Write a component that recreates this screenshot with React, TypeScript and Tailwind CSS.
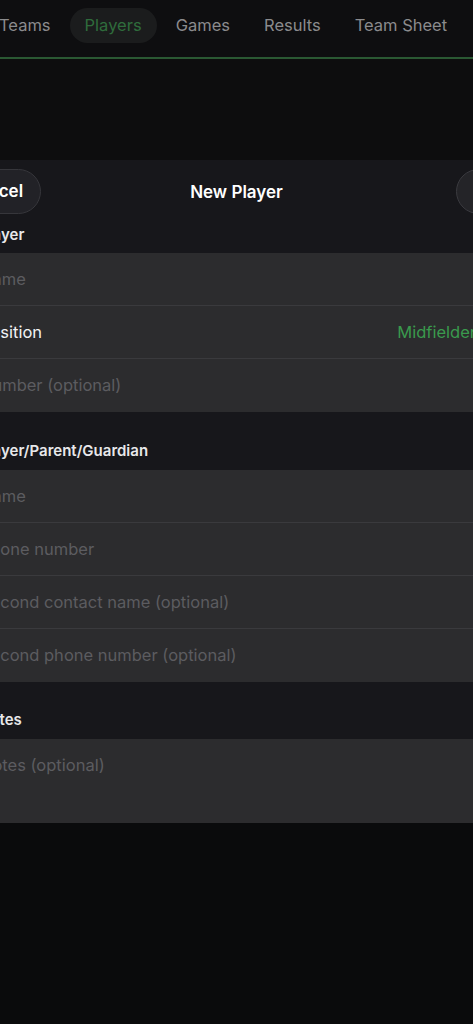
import { useState } from 'react';

const tabs = ['Teams', 'Players', 'Games', 'Results', 'Team Sheet'];

function SectionHeader({ title, className }: { title: string; className: string }) {
  return (
    <div className={`pl-[13px] ${className}`}>
      <p className="text-[15px] leading-[16px] font-semibold text-[#e8e8ea]">{title}</p>
    </div>
  );
}

function FieldRow({ placeholder, last }: { placeholder: string; last?: boolean }) {
  return (
    <div className="pl-[14px] h-[53px] flex">
      <div
        className={`flex-1 flex items-center ${last ? '' : 'border-b border-[#3a3a3d]'}`}
      >
        <input
          placeholder={placeholder}
          className="w-full bg-transparent outline-none text-[16.5px] text-white placeholder:text-[#5c5c60]"
        />
      </div>
    </div>
  );
}

export default function App() {
  const [activeTab] = useState('Players');

  return (
    <div
      className="w-[473px] h-[1024px] overflow-hidden bg-[#0a0b0c] flex flex-col"
      style={{ fontFamily: 'Inter, "Noto Sans", sans-serif' }}
    >
      {/* Top tabs */}
      <div className="h-[57px] bg-[#0e0e10] flex items-start pt-[8px] gap-[4px] -ml-[16px] shrink-0">
        {tabs.map(tab => (
          <div
            key={tab}
            className={`px-[15px] h-[35px] flex items-center rounded-full text-[16.5px] whitespace-nowrap ${
              tab === activeTab ? 'bg-[#1b1c1d] text-[#2f6c3c]' : 'text-[#8b8b8d]'
            }`}
          >
            {tab}
          </div>
        ))}
      </div>
      <div className="h-[2px] bg-[#2a5833] shrink-0"></div>
      <div className="h-[101px] bg-[#0d0d0e] shrink-0"></div>

      {/* New Player sheet */}
      <div className="bg-[#17171b] shrink-0">
        <div className="grid grid-cols-[1fr_auto_1fr] items-center pt-[9px] h-[54px]">
          <div className="flex justify-start">
            <button className="-ml-[52px] h-[45px] px-[17px] rounded-full bg-[#222227] border border-[#36363b] text-[17px] font-semibold text-white">
              Cancel
            </button>
          </div>
          <h1 className="text-[17px] font-semibold text-white pt-[3px]">New Player</h1>
          <div className="flex justify-end">
            <div className="-mr-[28px] w-[45px] h-[45px] rounded-full bg-[#242428] border border-[#3a3a3f]"></div>
          </div>
        </div>

        <div className="-ml-[34px]">
          <SectionHeader title="Player" className="pt-[13px] pb-[10px]" />
          <div className="bg-[#2c2c2e]">
            <FieldRow placeholder="Name" />
            <div className="pl-[14px] h-[53px] flex">
              <div className="flex-1 flex items-center justify-between border-b border-[#3a3a3d]">
                <span className="text-[16.5px] text-[#f2f2f4]">Position</span>
                <span className="text-[16.5px] text-[#3a9a4d] -mr-[3px]">Midfielder</span>
              </div>
            </div>
            <FieldRow placeholder="Number (optional)" last />
          </div>

          <SectionHeader title="Player/Parent/Guardian" className="pt-[31px] pb-[11px]" />
          <div className="bg-[#2c2c2e]">
            <FieldRow placeholder="Name" />
            <FieldRow placeholder="Phone number" />
            <FieldRow placeholder="Second contact name (optional)" />
            <FieldRow placeholder="Second phone number (optional)" last />
          </div>

          <SectionHeader title="Notes" className="pt-[30px] pb-[11px]" />
          <div className="bg-[#2c2c2e] h-[84px] pl-[14px] pt-[16px]">
            <textarea
              placeholder="Notes (optional)"
              className="w-full h-full resize-none bg-transparent outline-none text-[16.5px] leading-[20px] text-white placeholder:text-[#5c5c60]"
            />
          </div>
        </div>
      </div>
    </div>
  );
}
